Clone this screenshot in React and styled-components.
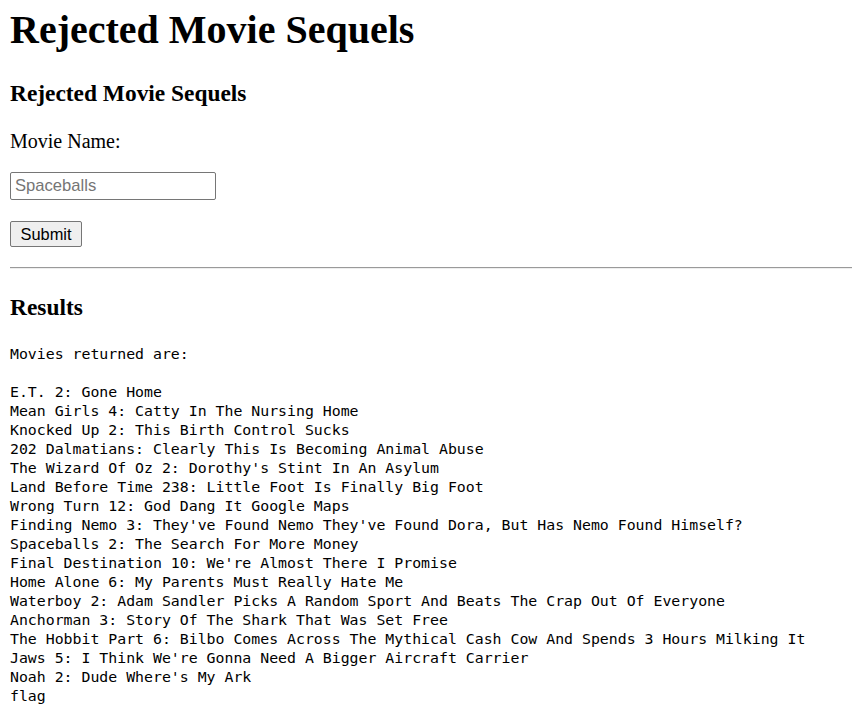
import React from 'react';
import styled, { createGlobalStyle } from 'styled-components';

const movies = [
  'E.T. 2: Gone Home',
  'Mean Girls 4: Catty In The Nursing Home',
  'Knocked Up 2: This Birth Control Sucks',
  '202 Dalmatians: Clearly This Is Becoming Animal Abuse',
  "The Wizard Of Oz 2: Dorothy's Stint In An Asylum",
  'Land Before Time 238: Little Foot Is Finally Big Foot',
  'Wrong Turn 12: God Dang It Google Maps',
  "Finding Nemo 3: They've Found Nemo They've Found Dora, But Has Nemo Found Himself?",
  'Spaceballs 2: The Search For More Money',
  "Final Destination 10: We're Almost There I Promise",
  'Home Alone 6: My Parents Must Really Hate Me',
  'Waterboy 2: Adam Sandler Picks A Random Sport And Beats The Crap Out Of Everyone',
  'Anchorman 3: Story Of The Shark That Was Set Free',
  'The Hobbit Part 6: Bilbo Comes Across The Mythical Cash Cow And Spends 3 Hours Milking It',
  "Jaws 5: I Think We're Gonna Need A Bigger Aircraft Carrier",
  "Noah 2: Dude Where's My Ark",
  'flag'
];

const GlobalStyle = createGlobalStyle`
  body {
    margin: 0;
    background: #fff;
    color: #000;
    font-family: "Liberation Serif", "Times New Roman", serif;
  }
`;

const Page = styled.div`
  padding: 5.5px 0 8px 10px;
`;

const Title = styled.h1`
  font-size: 40px;
  font-weight: bold;
  margin: 0;
`;

const Heading = styled.h3`
  font-size: 23.4px;
  font-weight: bold;
  margin: ${p => p.$gap}px 0 0;
`;

const Label = styled.p`
  font-size: 20px;
  margin: 23px 0 0;
`;

const Field = styled.input`
  display: block;
  box-sizing: border-box;
  width: 206px;
  height: 28px;
  margin: 19.5px 0 0;
  padding: 1px 4px;
  border: 1px solid #767676;
  border-radius: 2px;
  font-family: "Liberation Sans", Arial, sans-serif;
  font-size: 16.6px;
  color: #000;
  &::placeholder {
    color: #757575;
  }
`;

const Button = styled.button`
  display: block;
  box-sizing: border-box;
  height: 26px;
  margin: 21px 0 0;
  padding: 1px 9.5px;
  border: 1px solid #767676;
  border-radius: 2px;
  background: #efefef;
  font-family: "Liberation Sans", Arial, sans-serif;
  font-size: 16.4px;
  color: #000;
`;

const Rule = styled.hr`
  margin: 20px 0 0 0;
  border: none;
  border-top: 1px solid #9a9a9a;
  border-bottom: 1px solid #eeeeee;
`;

const Output = styled.pre`
  font-family: "DejaVu Sans Mono", Consolas, monospace;
  font-size: 14.85px;
  line-height: 19px;
  margin: 23.8px 0 0;
`;

export default function App() {
  return (
    <>
      <GlobalStyle />
      <Page>
        <Title>Rejected Movie Sequels</Title>
        <form onSubmit={e => e.preventDefault()}>
          <Heading $gap={27}>Rejected Movie Sequels</Heading>
          <Label>Movie Name:</Label>
          <Field type="text" placeholder="Spaceballs" />
          <Button type="submit">Submit</Button>
        </form>
        <Rule />
        <Heading $gap={25}>Results</Heading>
        <Output>{'Movies returned are:\n\n' + movies.join('\n')}</Output>
      </Page>
    </>
  );
}
